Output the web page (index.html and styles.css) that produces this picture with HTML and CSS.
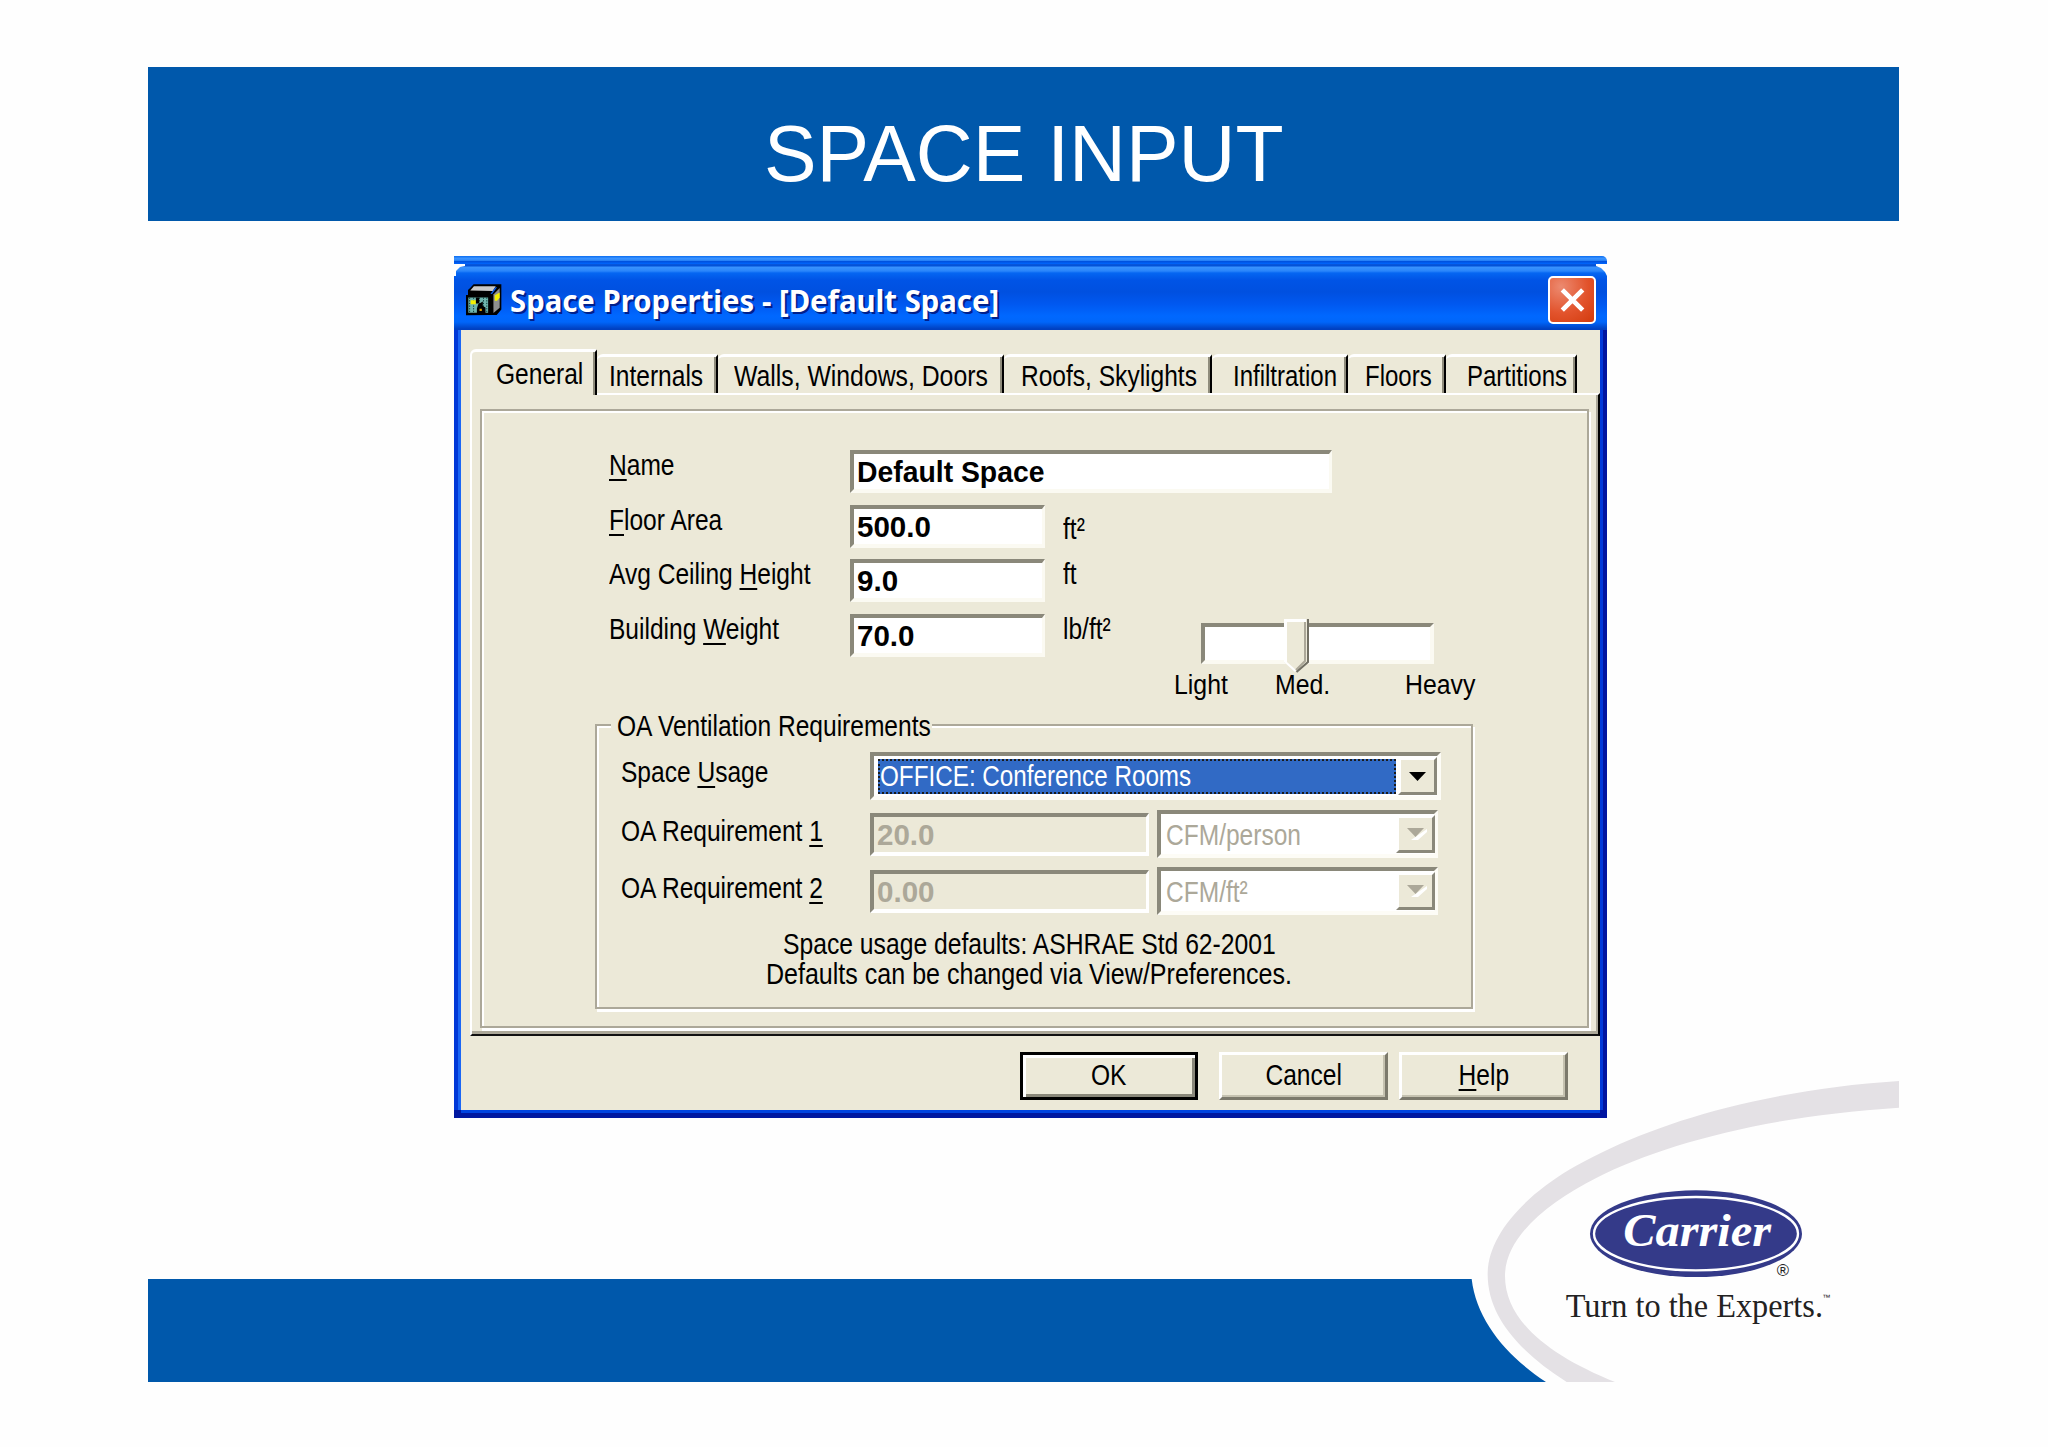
FILE: index.html
```html
<!DOCTYPE html>
<html lang="en">
<head>
<meta charset="utf-8">
<title>Space Input</title>
<link rel="stylesheet" href="styles.css">
</head>
<body>
<main class="slide">
  <header class="banner"><h1>SPACE INPUT</h1></header>

  <section class="window">
    <div class="window-strip"></div>
    <div class="titlebar">
      <svg class="app-icon" viewBox="0 0 112 98">
        <path d="M14 16 26 3h84v76L96 96H74L3 97V35h6V20z" fill="#000"/>
        <path d="M16 22 27 9h66l-9 14z" fill="#c9c9c9"/>
        <path d="M77 32 92 12h5L82 32z" fill="#0a5df0"/>
        <path d="M86 34 105 14v60L86 90z" fill="#8f8f8f"/>
        <path d="M90 36 105 28v16l-8 9h-7z" fill="#f4f000"/>
        <path d="M10 43h60v46H10z" fill="#6fb5ad"/>
        <path d="M14 43v46M26 43v46M44 43v46M56 43v46M66 43v46" stroke="#0d3b38" stroke-width="3" stroke-dasharray="4 4"/>
        <path d="M17 51h16v12H17z" fill="#f4f000"/>
        <path d="M33 43h10v18h-10zM40 63l14 -8v14l8 4v18H36V76z" fill="#000"/>
        <path d="M44 77h7v7h-7z" fill="#e0a000"/>
      </svg>
      <span class="title-text">Space Properties - [Default Space]</span>
      <button class="close" aria-label="Close"><svg viewBox="0 0 28 28"><path d="M3 3 25 25M25 3 3 25" stroke="#fff" stroke-width="5" fill="none"/></svg></button>
    </div>

    <div class="client">
      <nav class="tabs">
        <a class="tab tab-general"><span class="t">General</span></a>
        <a class="tab tab-internals"><span class="t">Internals</span></a>
        <a class="tab tab-walls"><span class="t">Walls, Windows, Doors</span></a>
        <a class="tab tab-roofs"><span class="t">Roofs, Skylights</span></a>
        <a class="tab tab-infil"><span class="t">Infiltration</span></a>
        <a class="tab tab-floors"><span class="t">Floors</span></a>
        <a class="tab tab-parts"><span class="t">Partitions</span></a>
      </nav>

      <div class="panel">
        <div class="frame">
          <div class="fields">
            <label class="t"><u>N</u>ame</label>
            <div class="input input-wide"><span class="b">Default Space</span></div>

            <label class="t"><u>F</u>loor Area</label>
            <div class="input"><span class="b num">500.0</span></div>
            <span class="t unit unit-low">ft²</span>

            <label class="t">Avg Ceiling <u>H</u>eight</label>
            <div class="input"><span class="b num">9.0</span></div>
            <span class="t unit">ft</span>

            <label class="t">Building <u>W</u>eight</label>
            <div class="input"><span class="b num">70.0</span></div>
            <span class="t unit">lb/ft²</span>
            <div class="slider">
              <div class="track">
                <svg class="thumb" viewBox="0 0 25 54">
                  <path d="M0 0h25v43L12.500 54 0 43z" fill="#ece9d8"/>
                  <path d="M0 0h22v3H3v40l9 8-1 2L0 43z" fill="#fff"/>
                  <path d="M21 3v39l-9 9" stroke="#aca899" stroke-width="2" fill="none"/>
                  <path d="M24 0v43L12.500 53" stroke="#716f64" stroke-width="2" fill="none"/>
                </svg>
              </div>
              <div class="ticks"><span>Light</span><span>Med.</span><span>Heavy</span></div>
            </div>
          </div>

          <section class="group">
            <h2 class="legend"><span class="t">OA Ventilation Requirements</span></h2>
            <div class="row row-usage">
              <label class="t">Space <u>U</u>sage</label>
              <div class="combo combo-main">
                <div class="selected"><span class="t">OFFICE: Conference Rooms</span></div>
                <div class="drop"><svg viewBox="0 0 17 9"><path d="M0 0h17L8.500 9z" fill="#000"/></svg></div>
              </div>
            </div>
            <div class="row row-req">
              <label class="t">OA Requirement <u>1</u></label>
              <div class="input input-off"><span class="b num">20.0</span></div>
              <div class="combo combo-off">
                <div class="value"><span class="t">CFM/person</span></div>
                <div class="drop"><svg viewBox="0 0 20 12"><path d="M4 12 20 1v3L11 12z" fill="#fff"/><path d="M0 0h17L8.500 9z" fill="#aca899"/></svg></div>
              </div>
            </div>
            <div class="row row-req">
              <label class="t">OA Requirement <u>2</u></label>
              <div class="input input-off"><span class="b num">0.00</span></div>
              <div class="combo combo-off">
                <div class="value"><span class="t">CFM/ft²</span></div>
                <div class="drop"><svg viewBox="0 0 20 12"><path d="M4 12 20 1v3L11 12z" fill="#fff"/><path d="M0 0h17L8.500 9z" fill="#aca899"/></svg></div>
              </div>
            </div>
            <p class="note"><span class="t">Space usage defaults: ASHRAE Std 62-2001</span><span class="t note-wide">Defaults can be changed via View/Preferences.</span></p>
          </section>
        </div>
      </div>

      <div class="actions">
        <button class="btn btn-ok"><span class="t">OK</span></button>
        <button class="btn"><span class="t">Cancel</span></button>
        <button class="btn"><span class="t"><u>H</u>elp</span></button>
      </div>
    </div>
  </section>

  <footer class="footer"></footer>
  <svg class="brand" viewBox="0 0 1410 1020">
    <path d="M0 654H65C80 780 170 885 288 963H0z" fill="#0058ab"/>
    <path d="M1347 60C1160 72 990 100 830 140C640 188 480 255 360 325C210 415 113 530 113 640C113 765 205 870 350 963H495C300 885 165 780 165 645C165 530 290 425 440 350C640 250 950 165 1347 140z" fill="#e4e1e5"/>
    <ellipse cx="738" cy="518" rx="318" ry="130" fill="#343a89"/>
    <ellipse cx="738" cy="518" rx="306" ry="110" fill="none" stroke="#fff" stroke-width="7"/>
    <text class="brand-name" x="520" y="556" textLength="443" lengthAdjust="spacingAndGlyphs">Carrier</text>
    <text class="brand-reg" x="980" y="645">®</text>
    <text class="brand-line" x="347" y="767" textLength="772" lengthAdjust="spacingAndGlyphs">Turn to the Experts.</text>
    <text class="brand-tm" x="1117" y="718">™</text>
  </svg>
</main>
</body>
</html>
```
FILE: styles.css
```css
* { box-sizing: border-box; }
body { margin: 0; background: #fefefe; font-family: "Liberation Sans", Arial, sans-serif; }
.slide { position: relative; width: 2048px; height: 1447px; padding: 67px 149px 0 148px; overflow: hidden; }

.banner { height: 154px; background: #0058ab; display: flex; justify-content: center; }
.banner h1 { margin: 0; color: #fff; font-weight: 400; font-size: 80px; line-height: 116px; padding-top: 29px; white-space: nowrap; transform: scaleX(.985); }

.t { display: inline-block; font-size: 30px; line-height: 29px; color: #000; white-space: nowrap; transform: scaleX(.818); transform-origin: 0 50%; }
.t u { text-decoration-thickness: 2px; text-underline-offset: 4px; text-decoration-skip-ink: none; }
.b { display: inline-block; font-size: 30px; line-height: 35px; font-weight: 700; white-space: nowrap; transform: scaleX(.945); transform-origin: 0 50%; }
.b.num { transform: scaleX(.985); }

.window { width: 1153px; height: 862px; margin: 35px 0 0 306px; background: linear-gradient(#fefefe 40px, #0a35c8 40px); }
.window-strip { height: 8px; border-radius: 0 5px 0 0; background: linear-gradient(#0a6cf2, #3a93ff 30%, #2d88fb 55%, #0050dc 65%, #0066ff); }
.titlebar { display: flex; align-items: flex-start; height: 66px; padding: 0 11px;
  clip-path: polygon(0 12px, 2px 12px, 2px 7px, 6px 3px, 11px 2px, 11px 0, calc(100% - 11px) 0, calc(100% - 11px) 2px, calc(100% - 6px) 4px, calc(100% - 2px) 8px, 100% 12px, 100% 100%, 0 100%);
  background: linear-gradient(#0a58dc 0, #0050d8 2px, #3a93ff 3px, #2a86fb 7px, #0566f2 9px, #0054e6 16px, #0050e0 28px, #0058f0 40px, #0068ff 52px, #0066fa 58px, #0040c0 65px); }
.app-icon { width: 37px; height: 33px; margin-top: 19px; flex: none; }
.title-text { font: 700 30px/44px "Noto Sans", sans-serif; color: #fff; text-shadow: 2px 2px 0 #00208c; margin: 15px 0 0 8px; white-space: nowrap; transform: scaleX(.977); transform-origin: 0 50%; flex: 1; }
.close { width: 48px; height: 48px; margin-top: 12px; padding: 9px 8px; border: 2px solid #fff; border-radius: 5px; background: radial-gradient(circle at 25% 20%, #ec8a70, #e2532c 55%, #d23a0c); flex: none; line-height: 0; }
.close svg { width: 27px; height: 26px; }

.client { margin: 0 7px; height: 780px; background: #ece9d8; padding: 18px 0 0 9px; box-shadow: 0 3px 0 #0044e0, -3px 0 0 #1a66f5, 3px 0 0 #0038d8, -7px 0 0 #0038d8, 7px 0 0 #0014a0, 0 8px 0 #0018a0, -7px 8px 0 #0018a0, 7px 8px 0 #0014a0; }
.tabs { display: flex; align-items: flex-end; height: 45px; width: 1107px; }
.tab { height: 39px; border-top: 3px solid #fff; border-right: 2px solid #000; border-radius: 6px 2px 0 0; box-shadow: inset -2px 0 0 #8f8c7c; padding-top: 4px; line-height: 0; }
.tab-general { position: relative; width: 127px; height: 46px; margin-bottom: -2px; padding: 7px 0 0 24px; border-left: 2px solid #fff; background: #ece9d8; z-index: 1; }
.tab-internals { width: 121px; padding-left: 12px; }
.tab-walls { width: 286px; padding-left: 16px; }
.tab-walls .t { transform: scaleX(.826); }
.tab-roofs { width: 208px; padding-left: 17px; }
.tab-infil { width: 136px; padding-left: 21px; }
.tab-floors { width: 98px; padding-left: 17px; }
.tab-parts { width: 131px; padding-left: 21px; }
.tab-infil .t, .tab-floors .t, .tab-parts .t { transform: scaleX(.8); }

.panel { height: 643px; border: 2px solid; border-color: #fff #000 #111 #fff; box-shadow: inset -2px -3px 0 #aca899; padding: 14px 8px 6px 8px; }
.frame { height: 619px; border: 2px solid #aca899; box-shadow: inset 2px 2px 0 #fff, 2px 3px 0 #fff; padding: 39px 0 0 127px; margin-right: 1px; }

.fields { display: grid; grid-template-columns: 241px 214px 111px 1fr; grid-auto-rows: 43px; row-gap: 11.700px; height: 208px; align-items: start; }
.fields label { grid-column: 1; }
.input { width: 195px; height: 43px; padding: 0 3px; border: 4px solid; border-color: #8a887a #fbfaf2 #fbfaf2 #8a887a; border-width: 4px 3px 4px 4px; background: #fff; line-height: 0; }
.input-wide { width: 482px; grid-column: 2 / 5; }
.unit { margin-left: -1px; }
.unit-low { margin-top: 9px; }
.slider { width: 302px; padding: 9px 0 0 26px; }
.track { position: relative; width: 233px; height: 41px; border: 4px solid; border-color: #8a887a #fbfaf2 #fbfaf2 #8a887a; background: #fff; }
.thumb { position: absolute; left: 79px; top: -8px; width: 25px; height: 54px; }
.ticks { display: flex; margin: 5px 0 0 -27px; font-size: 27px; line-height: 32px; white-space: nowrap; }
.ticks span { transform: scaleX(.92); transform-origin: 0 50%; width: 101px; flex: none; }
.ticks span:nth-child(2) { width: 130px; }

.group { width: 878px; height: 285px; margin: 66px 0 0 -14px; border: 2px solid #aca899; box-shadow: inset 2px 2px 0 #fff, 2px 3px 0 #fff; }
.legend { margin: -15px 0 0 14px; width: 321px; height: 30px; padding-left: 6px; background: #ece9d8; line-height: 0; font-weight: 400; }
.row { display: flex; align-items: flex-start; padding-left: 24px; }
.row > label { width: 249px; flex: none; }
.row-usage { margin-top: 10px; height: 58px; }
.row-usage > label { margin-top: 6px; }
.row-req { height: 57px; }
.row-req > label { margin-top: 7px; }
.row-usage .combo { margin-top: 1px; }
.input-off { width: 279px; margin-top: 4px; background: #ece9d8; border-color: #8a887a #fff #fff #8a887a; color: #aca899; }
.combo { display: flex; height: 48px; border: 4px solid; border-color: #8a887a #fdfcf6 #fdfcf6 #8a887a; background: #fff; }
.combo-main { width: 571px; }
.selected { width: 518px; height: 35px; margin: 3px 0 0 4px; background: #316ac5; border: 2px dotted #c89850; outline: 2px dotted #1b1b1b; outline-offset: -2px; line-height: 0; flex: none; }
.selected .t { color: #fff; line-height: 30px; transform: scaleX(.808); }
.drop { width: 39px; height: 38px; margin: 1px 0 0 2px; border: 3px solid; border-color: #fff #8a887a #8a887a #fff; background: #ece9d8; display: flex; align-items: center; justify-content: center; flex: none; }
.drop svg { width: 17px; height: 9px; }
.combo-off { width: 281px; margin: 1px 0 0 8px; }
.combo-off .value { width: 235px; padding: 6px 0 0 5px; line-height: 0; flex: none; }
.combo-off .t { color: #aca899; }
.combo-off .drop { margin-left: 0; }
.combo-off .drop svg { width: 20px; height: 12px; margin-left: 3px; }
.note { margin: 6px 0 0; display: flex; flex-direction: column; align-items: center; padding-right: 10px; }
.note .t { line-height: 30px; transform: scaleX(.823); transform-origin: 50% 50%; }
.note .note-wide { transform: scaleX(.835); }

.actions { display: flex; margin: 16px 0 0 550px; }
.btn { width: 169px; height: 48px; padding: 0 0 3px; border: 3px solid; border-color: #fff #7c7a6c #7c7a6c #fff; box-shadow: inset -2px -2px 0 #c5c2b0; background: #ece9d8; font-family: inherit; margin-right: 11px; }
.btn .t { transform-origin: 50% 50%; }
.btn-ok { width: 178px; margin-right: 21px; border: 3px solid #000; box-shadow: inset 3px 3px 0 #fff, inset -3px -3px 0 #8a887a; }

.footer { height: 103px; margin-top: 161px; width: 1303px; background: #0058ab; }
.brand { position: absolute; left: 1450px; top: 1061px; width: 470px; height: 340px; }
.brand-name { font: italic 700 138px "Liberation Serif", serif; fill: #fff; }
.brand-reg { font: 50px "Liberation Sans", sans-serif; fill: #222; }
.brand-line { font: 98px "Liberation Serif", serif; fill: #222; }
.brand-tm { font: 24px "Liberation Sans", sans-serif; fill: #222; }
```
